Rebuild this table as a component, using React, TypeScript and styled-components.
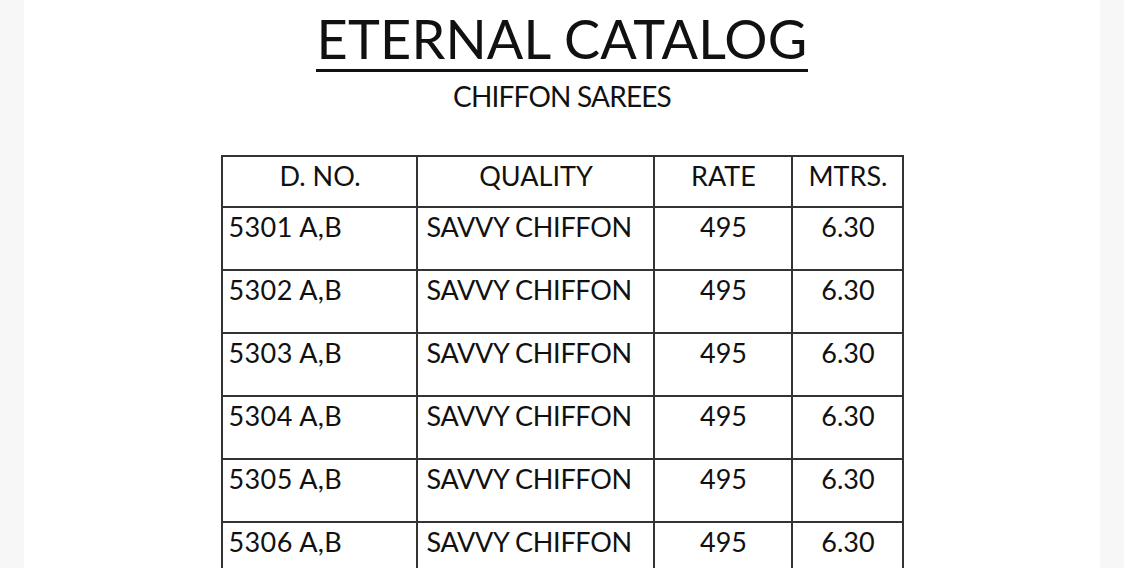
import React from "react";
import styled, { createGlobalStyle } from "styled-components";

const Global = createGlobalStyle`
  html, body {
    margin: 0;
    padding: 0;
    background: #f7f7f7;
  }
  body {
    font-family: Lato, "Open Sans", sans-serif;
    color: #111;
  }
`;

const Page = styled.div`
  width: 1076px;
  height: 568px;
  margin: 0 24px;
  background: #ffffff;
  overflow: hidden;
  display: flex;
  flex-direction: column;
  align-items: center;
  padding-top: 9px;
  box-sizing: border-box;
`;

const Title = styled.h1`
  margin: 0;
  font-family: Lato, "Open Sans", sans-serif;
  font-weight: 400;
  font-size: 54px;
  line-height: 60px;
  letter-spacing: 0.2px;
  color: #111;
  border-bottom: 3px solid #111;
  padding: 0 1px;
`;

const Subtitle = styled.h2`
  margin: 7px 0 0;
  font-family: Lato, "Open Sans", sans-serif;
  font-weight: 400;
  font-size: 28px;
  line-height: 34px;
  letter-spacing: -0.8px;
  color: #111;
`;

const Grid = styled.div`
  margin-top: 42px;
  display: grid;
  grid-template-columns: 193px 235px 136px 109px;
  grid-auto-rows: 61px;
  grid-template-rows: 49px;
  gap: 2px;
  padding: 2px;
  background: #333;
  flex-shrink: 0;
`;

const Cell = styled.div<{ $align?: "left" | "center"; $indent?: number }>`
  background: #fff;
  font-family: Lato, "Open Sans", sans-serif;
  font-size: 27px;
  line-height: 32px;
  color: #111;
  padding: 3px 4px 0 ${(p) => p.$indent ?? 6}px;
  text-align: ${(p) => (p.$align === "center" ? "center" : "left")};
  white-space: nowrap;
`;

const Wide = styled(Cell)`
  letter-spacing: 0.4px;
`;

const Narrow = styled(Cell)`
  letter-spacing: -0.3px;
`;

const rows = ["5301", "5302", "5303", "5304", "5305", "5306"];

export default function App() {
  return (
    <>
      <Global />
      <Page>
        <Title>ETERNAL CATALOG</Title>
        <Subtitle>CHIFFON SAREES</Subtitle>
        <Grid>
          <Cell $align="center">D. NO.</Cell>
          <Cell $align="center">QUALITY</Cell>
          <Cell $align="center">RATE</Cell>
          <Cell $align="center">MTRS.</Cell>
          {rows.map((r) => (
            <React.Fragment key={r}>
              <Wide>{r} A,B</Wide>
              <Narrow $indent={9}>SAVVY CHIFFON</Narrow>
              <Cell $align="center">495</Cell>
              <Cell $align="center">6.30</Cell>
            </React.Fragment>
          ))}
        </Grid>
      </Page>
    </>
  );
}
